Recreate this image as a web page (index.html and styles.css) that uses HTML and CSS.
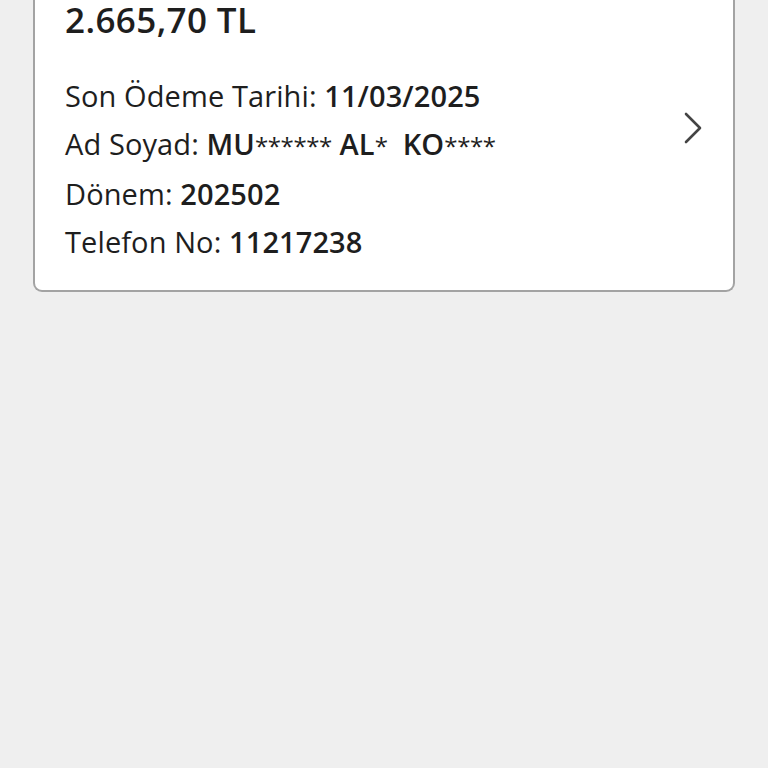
FILE: index.html
```html
<!DOCTYPE html>
<html lang="tr">
<head>
<meta charset="utf-8">
<link rel="stylesheet" href="styles.css">
</head>
<body>
<div class="page">
  <div class="card">
    <div class="amount">2.665,70 TL</div>
    <div class="row-wrap">
      <div class="details">
        <div class="line">Son Ödeme Tarihi: <b>11/03/2025</b></div>
        <div class="line">Ad Soyad: <b>MU<span class="ast">******</span> AL<span class="ast">*</span>&nbsp; KO<span class="ast">****</span></b></div>
        <div class="line">Dönem: <b>202502</b></div>
        <div class="line">Telefon No: <b>11217238</b></div>
      </div>
      <svg class="chev" width="20" height="34" viewBox="0 0 20 34">
        <path d="M3 2 L17 16 L3 30" fill="none" stroke="#444" stroke-width="2.6" stroke-linecap="round" stroke-linejoin="round"/>
      </svg>
    </div>
  </div>
</div>
</body>
</html>
```
FILE: styles.css
```css
html, body {
  margin: 0;
  padding: 0;
  background: #efefef;
}
body {
  font-family: "Open Sans", "Noto Sans", sans-serif;
  color: #1e1e1e;
  height: 768px;
  overflow: hidden;
}
.page {
  padding: 0 33px;
}
.card {
  margin-top: -40px;
  background: #fff;
  border: 2px solid #a3a3a3;
  border-top: none;
  border-radius: 0 0 9px 9px;
  padding: 38px 30px 24px 30px;
}
.amount {
  font-size: 35px;
  font-weight: 600;
  line-height: 44px;
  letter-spacing: 0.4px;
}
.row-wrap {
  display: flex;
  align-items: flex-start;
  justify-content: space-between;
  margin-top: 30px;
}
.line {
  font-size: 29px;
  line-height: 48px;
  font-weight: 400;
  letter-spacing: 0.1px;
}
.line b {
  font-weight: 600;
}
.ast {
  font-weight: 400;
  font-size: 24px;
  letter-spacing: -0.4px;
}
.chev {
  margin-top: 40px;
  margin-right: 0;
}
```
